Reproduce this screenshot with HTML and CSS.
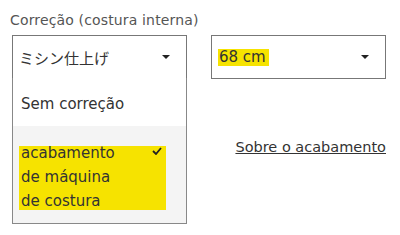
FILE: index.html
```html
<html>
<head>
<meta charset="utf-8">
<title>Correção</title>
<link rel="stylesheet" href="styles.css">
</head>
<body>
<div class="form">
    <div class="label">Correção (costura interna)</div>
    <div class="row">
        <div class="field field-left">
            <div class="select">
                <span class="value">ミシン仕上げ</span>
                <span class="arrow"></span>
            </div>
            <ul class="dropdown">
                <li class="option">Sem correção</li>
                <li class="option selected">
                    <span class="mark-block">acabamento<br>de máquina<br>de costura</span>
                    <svg class="check" width="10" height="8" viewBox="0 0 10 8"><path d="M1 4 L4 7 L9 1" fill="none" stroke="#222" stroke-width="1.8"/></svg>
                </li>
            </ul>
        </div>
        <div class="field field-right">
            <div class="select">
                <span class="value mark">68 cm</span>
                <span class="arrow"></span>
            </div>
            <a class="about" href="#">Sobre o acabamento</a>
        </div>
    </div>
</div>
</body>
</html>
```

FILE: styles.css
```css
body {
    margin: 0;
    background: #ffffff;
    font-family: "DejaVu Sans", sans-serif;
    color: #222;
}

.form {
    padding: 11px 14px 0 10px;
}

.label {
    font-size: 14px;
    letter-spacing: 0.15px;
    color: #555;
    line-height: 18px;
}

.row {
    display: flex;
    justify-content: space-between;
    margin-top: 6px;
}

.field {
    position: relative;
    width: 175px;
}

.field-left {
    margin-left: 2px;
}

.select {
    display: flex;
    align-items: center;
    justify-content: space-between;
    height: 42px;
    border: 1px solid #777;
    padding: 0 16px 0 6px;
}

.value {
    font-size: 15px;
    font-family: "Noto Sans CJK JP", "DejaVu Sans", sans-serif;
    color: #333;
}

.mark {
    background: #f6e300;
}

.field-right .value {
    font-family: "DejaVu Sans", sans-serif;
    padding: 0 3px 0 1px;
    line-height: 17px;
}

.arrow {
    width: 0;
    height: 0;
    border-left: 4px solid transparent;
    border-right: 4px solid transparent;
    border-top: 4px solid #222;
}

.dropdown {
    position: absolute;
    top: 43px;
    left: 0;
    width: 173px;
    margin: 0;
    padding: 0;
    list-style: none;
    border: 1px solid #888;
    border-top: none;
    background: #fff;
}

.option {
    font-size: 15px;
    color: #333;
}

.option:first-child {
    height: 48px;
    line-height: 53px;
    padding-left: 8px;
}

.selected {
    position: relative;
    background: #f4f4f4;
    padding: 15px 0 10px 6px;
    line-height: 24px;
}

.mark-block {
    display: inline-block;
    width: 145px;
    padding-left: 2px;
    background: linear-gradient(#f6e300, #f6e300) no-repeat 0 5px / 100% 64px;
}

.check {
    position: absolute;
    left: 139px;
    top: 21px;
}

.about {
    display: block;
    text-align: right;
    margin-top: 60px;
    font-size: 14.5px;
    color: #333;
}
```
